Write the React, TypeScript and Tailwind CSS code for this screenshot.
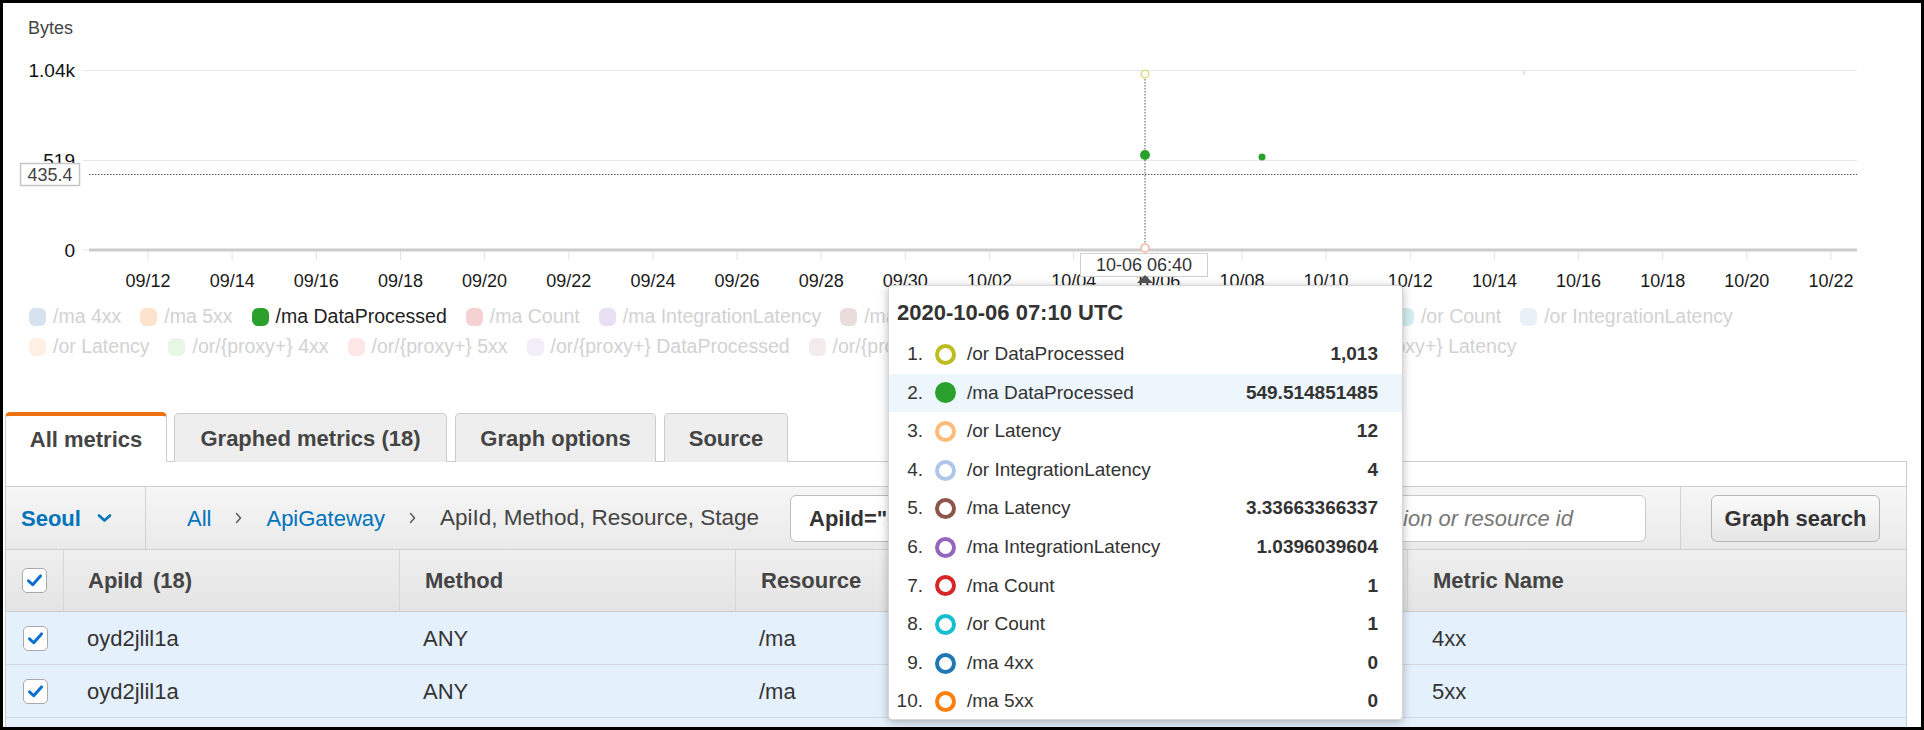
import React from 'react';

const xLabels = [
  '09/12', '09/14', '09/16', '09/18', '09/20', '09/22', '09/24', '09/26', '09/28', '09/30',
  '10/02', '10/04', '10/06', '10/08', '10/10', '10/12', '10/14', '10/16', '10/18', '10/20', '10/22',
];

const legendRows = [
  [
    { label: '/ma 4xx', swatch: 'bg-[#d6e2ef]' },
    { label: '/ma 5xx', swatch: 'bg-[#fde2cd]' },
    { label: '/ma DataProcessed', swatch: 'bg-[#2ca02c]', active: true },
    { label: '/ma Count', swatch: 'bg-[#f6d1d1]' },
    { label: '/ma IntegrationLatency', swatch: 'bg-[#e8dff2]' },
    { label: '/ma Latency', swatch: 'bg-[#e8dddb]' },
    { label: '/or 4xx', swatch: 'bg-[#f8e2f1]' },
    { label: '/or 5xx', swatch: 'bg-[#e4e4e4]' },
    { label: '/or DataProcessed', swatch: 'bg-[#eeeed0]' },
    { label: '/or Count', swatch: 'bg-[#d3eef1]' },
    { label: '/or IntegrationLatency', swatch: 'bg-[#eaf0f8]' },
  ],
  [
    { label: '/or Latency', swatch: 'bg-[#fff0e3]' },
    { label: '/or/{proxy+} 4xx', swatch: 'bg-[#e8f6e5]' },
    { label: '/or/{proxy+} 5xx', swatch: 'bg-[#ffe6e6]' },
    { label: '/or/{proxy+} DataProcessed', swatch: 'bg-[#f2eef7]' },
    { label: '/or/{proxy+} Count', swatch: 'bg-[#f3ebe9]' },
    { label: '/or/{proxy+} IntegrationLatency', swatch: 'bg-[#fdedf4]' },
    { label: '/or/{proxy+} Latency', swatch: 'bg-[#f0f0f0]' },
  ],
];

const tooltipRows = [
  { n: '1.', label: '/or DataProcessed', value: '1,013', ring: 'border-[#bcbd22]' },
  { n: '2.', label: '/ma DataProcessed', value: '549.514851485', ring: 'border-[#2ca02c] bg-[#2ca02c]', hot: true },
  { n: '3.', label: '/or Latency', value: '12', ring: 'border-[#ffbb78]' },
  { n: '4.', label: '/or IntegrationLatency', value: '4', ring: 'border-[#aec7e8]' },
  { n: '5.', label: '/ma Latency', value: '3.33663366337', ring: 'border-[#8c564b]' },
  { n: '6.', label: '/ma IntegrationLatency', value: '1.0396039604', ring: 'border-[#9467bd]' },
  { n: '7.', label: '/ma Count', value: '1', ring: 'border-[#d62728]' },
  { n: '8.', label: '/or Count', value: '1', ring: 'border-[#17becf]' },
  { n: '9.', label: '/ma 4xx', value: '0', ring: 'border-[#1f77b4]' },
  { n: '10.', label: '/ma 5xx', value: '0', ring: 'border-[#ff7f0e]' },
];

const rows = [
  { apiId: 'oyd2jlil1a', method: 'ANY', resource: '/ma', stage: 'prod', metric: '4xx' },
  { apiId: 'oyd2jlil1a', method: 'ANY', resource: '/ma', stage: 'prod', metric: '5xx' },
];

function Checkbox() {
  return (
    <span className="w-[25px] h-[25px] rounded-[5px] border border-[#a9a9a9] bg-white flex items-center justify-center">
      <svg width="17" height="17" viewBox="0 0 24 24">
        <path d="M3.5 12.5l6 5.5L20.5 5.5" fill="none" stroke="#0b6fcf" strokeWidth="4.2" strokeLinecap="round" strokeLinejoin="round" />
      </svg>
    </span>
  );
}

function Chevron({ dir }: { dir: 'down' | 'right' }) {
  if (dir === 'down') {
    return (
      <svg width="15" height="10" viewBox="0 0 15 10">
        <path d="M2 2.5l5.5 5 5.5-5" fill="none" stroke="#0073bb" strokeWidth="2.6" strokeLinecap="round" strokeLinejoin="round" />
      </svg>
    );
  }
  return (
    <svg width="9" height="14" viewBox="0 0 9 14">
      <path d="M2.5 2.5l4 4.5-4 4.5" fill="none" stroke="#555" strokeWidth="1.4" strokeLinecap="round" strokeLinejoin="round" />
    </svg>
  );
}

function Chart() {
  const x0 = 148;
  const step = 84.15;
  return (
    <svg width="1924" height="302" className="block" fontFamily="'Liberation Sans', Arial, sans-serif">
      <text x="28" y="34" fontSize="18" fill="#444">Bytes</text>

      {/* grid */}
      <line x1="82" y1="70.5" x2="1857" y2="70.5" stroke="#e8e8e8" />
      <line x1="82" y1="160.5" x2="1857" y2="160.5" stroke="#e8e8e8" />
      <line x1="82" y1="250" x2="89" y2="250" stroke="#e8e8e8" />
      <line x1="1524" y1="70" x2="1524" y2="75" stroke="#e4e4ec" strokeWidth="2" />

      <text x="75" y="77" textAnchor="end" fontSize="19" fill="#111">1.04k</text>
      <text x="75" y="167" textAnchor="end" fontSize="19" fill="#111">519</text>
      <text x="75" y="257" textAnchor="end" fontSize="19" fill="#111">0</text>

      {/* horizontal annotation */}
      <line x1="89" y1="174.5" x2="1857" y2="174.5" stroke="#555" strokeDasharray="1.5 1.5" />
      <rect x="20.5" y="163.5" width="59" height="22" fill="#fff" stroke="#c6c6c6" strokeWidth="1.5" />
      <text x="50" y="181" textAnchor="middle" fontSize="18" fill="#444">435.4</text>

      {/* axis */}
      <line x1="89" y1="250" x2="1857" y2="250" stroke="#cccccc" strokeWidth="3" />
      {xLabels.map((l, i) => (
        <g key={l}>
          <line x1={x0 + i * step} y1="251.5" x2={x0 + i * step} y2="260" stroke="#e2e2e2" />
          <text x={x0 + i * step} y="287" textAnchor="middle" fontSize="18" fill="#1a1a1a">{l}</text>
        </g>
      ))}

      {/* hover */}
      <line x1="1145" y1="76" x2="1145" y2="246" stroke="#555" strokeDasharray="1.5 1.5" />
      <circle cx="1145" cy="74" r="3.8" fill="#fff" stroke="#dedc8e" strokeWidth="1.6" />
      <circle cx="1145" cy="155" r="5" fill="#2ca02c" />
      <circle cx="1262" cy="157" r="3.5" fill="#2ca02c" />
      <circle cx="1145" cy="248" r="4" fill="#fff" stroke="#f2b9a3" strokeWidth="1.6" />

      <rect x="1080.5" y="253.5" width="127" height="23" fill="#fff" stroke="#cfcfcf" />
      <text x="1144" y="271" textAnchor="middle" fontSize="18" fill="#333">10-06 06:40</text>
      <path d="M1145 275 L1153 283 L1137 283 Z" fill="#555" />
    </svg>
  );
}

function Tooltip() {
  return (
    <div className="absolute left-[888px] top-[285px] w-[515px] h-[435px] bg-white border border-[#d6d6d6] rounded-[4px] shadow-[0_2px_10px_rgba(0,0,0,0.28)] overflow-hidden text-[#333]">
      <div className="h-[49px] pt-[14px] pl-[8px] text-[22px] leading-[26px] font-bold">2020-10-06 07:10 UTC</div>
      {tooltipRows.map((r) => (
        <div key={r.n} className={`h-[38.6px] flex items-center pr-[24px] text-[19px] ${r.hot ? 'bg-[#eef6fd]' : ''}`}>
          <span className="w-[34px] text-right">{r.n}</span>
          <span className={`ml-[12px] w-[21px] h-[21px] rounded-full border-[4px] ${r.ring}`} />
          <span className="ml-[11px] flex-1">{r.label}</span>
          <span className="font-bold">{r.value}</span>
        </div>
      ))}
    </div>
  );
}

function Tabs() {
  return (
    <div className="flex items-end gap-[7px] pl-[5px] h-[50px] relative z-10 -mb-px">
      <div className="w-[162px] h-[50px] bg-white border-x border-[#cccccc] border-t-[4px] border-t-[#ec7211] rounded-t-[5px] flex items-center justify-center text-[22px] font-bold text-[#444]">
        All metrics
      </div>
      {['Graphed metrics (18)', 'Graph options', 'Source'].map((t, i) => (
        <div
          key={t}
          className={`${i === 0 ? 'w-[273px]' : i === 1 ? 'w-[201px] ml-[1px]' : 'w-[124px] ml-[1px]'} h-[49px] bg-[#eeeeee] border border-b-0 border-[#cccccc] rounded-t-[5px] flex items-center justify-center text-[22px] font-bold text-[#444]`}
        >
          {t}
        </div>
      ))}
    </div>
  );
}

function Toolbar() {
  return (
    <div className="h-[64px] flex items-stretch border-y border-[#cfcfcf] bg-gradient-to-b from-[#f6f6f6] to-[#eaeaea] text-[22px]">
      <div className="w-[140px] flex items-center pl-[15px] gap-[16px] border-r border-[#d2d2d2]">
        <span className="font-bold text-[#0073bb]">Seoul</span>
        <Chevron dir="down" />
      </div>
      <div className="w-[644px] flex items-center pl-[41px] gap-[23px]">
        <span className="text-[#0073bb]">All</span>
        <Chevron dir="right" />
        <span className="text-[#0073bb]">ApiGateway</span>
        <Chevron dir="right" />
        <span className="text-[#444] whitespace-nowrap text-[22.5px]">ApiId, Method, Resource, Stage</span>
      </div>
      <div className="flex items-center">
        <div className="w-[290px] h-[47px] bg-white border border-[#bdbdbd] rounded-[6px] flex items-center pl-[18px] font-bold text-[#333] whitespace-nowrap overflow-hidden">
          ApiId="oyd2jlil1a"
        </div>
      </div>
      <div className="flex-1 flex items-center pl-[16px] pr-[34px]">
        <div className="w-full h-[47px] bg-white border border-[#c8c8c8] rounded-[6px] flex items-center justify-end pr-[72px] italic text-[#777] whitespace-nowrap overflow-hidden">
          Search for any metric, dimension or resource id
        </div>
      </div>
      <div className="w-[226px] flex items-center pl-[30px] border-l border-[#d2d2d2]">
        <button className="w-[169px] h-[47px] rounded-[6px] border border-[#b8b8b8] bg-gradient-to-b from-[#fbfbfb] to-[#e6e6e6] font-bold text-[#333]">
          Graph search
        </button>
      </div>
    </div>
  );
}

function Table() {
  const cols = 'grid grid-cols-[58px_336px_336px_336px_336px_1fr]';
  return (
    <div className="text-[22px]">
      <div className={`${cols} h-[62px] border-b border-[#cccccc] bg-gradient-to-b from-[#efefef] to-[#e4e4e4] font-bold text-[#444]`}>
        <div className="flex items-center justify-center border-r border-[#d6d6d6]"><Checkbox /></div>
        <div className="flex items-center pl-[24px] border-r border-[#d6d6d6]">ApiId<span className="ml-[10px]">(18)</span></div>
        <div className="flex items-center pl-[25px] border-r border-[#d6d6d6]">Method</div>
        <div className="flex items-center pl-[25px] border-r border-[#d6d6d6]">Resource</div>
        <div className="flex items-center pl-[25px] border-r border-[#d6d6d6]">Stage</div>
        <div className="flex items-center pl-[25px]">Metric Name</div>
      </div>
      {rows.map((r, i) => (
        <div key={i} className={`${cols} h-[53px] border-b border-[#d3d9de] bg-[#e4f0fb] text-[#333]`}>
          <div className="flex items-center justify-center"><Checkbox /></div>
          <div className="flex items-center pl-[23px]">{r.apiId}</div>
          <div className="flex items-center pl-[23px]">{r.method}</div>
          <div className="flex items-center pl-[23px]">{r.resource}</div>
          <div className="flex items-center pl-[23px]">{r.stage}</div>
          <div className="flex items-center pl-[24px]">{r.metric}</div>
        </div>
      ))}
      {/* next row, below the fold */}
      <div className="h-[53px] bg-[#e4f0fb]" />
    </div>
  );
}

export default function App() {
  return (
    <div className="w-[1924px] h-[730px] bg-white relative overflow-hidden font-['Liberation_Sans',Arial,sans-serif]">
      <Chart />

      <div className="pl-[29px] text-[19.5px]">
        {legendRows.map((row, ri) => (
          <div key={ri} className="h-[30px] flex items-center whitespace-nowrap">
            {row.map((it) => (
              <div key={it.label} className="flex items-center mr-[19px]">
                <span className={`w-[17px] h-[18px] rounded-[6px] mr-[7px] ${it.swatch}`} />
                <span className={it.active ? 'text-[#222]' : 'text-[#d2d2d2]'}>{it.label}</span>
              </div>
            ))}
          </div>
        ))}
      </div>

      <div className="mt-[50px]">
        <Tabs />
        <div className="ml-[5px] w-[1902px] border border-b-0 border-[#cccccc] pt-[24px] bg-white">
          <Toolbar />
          <Table />
        </div>
      </div>

      <Tooltip />
      <div className="absolute inset-0 border-[3px] border-black pointer-events-none" />
    </div>
  );
}
